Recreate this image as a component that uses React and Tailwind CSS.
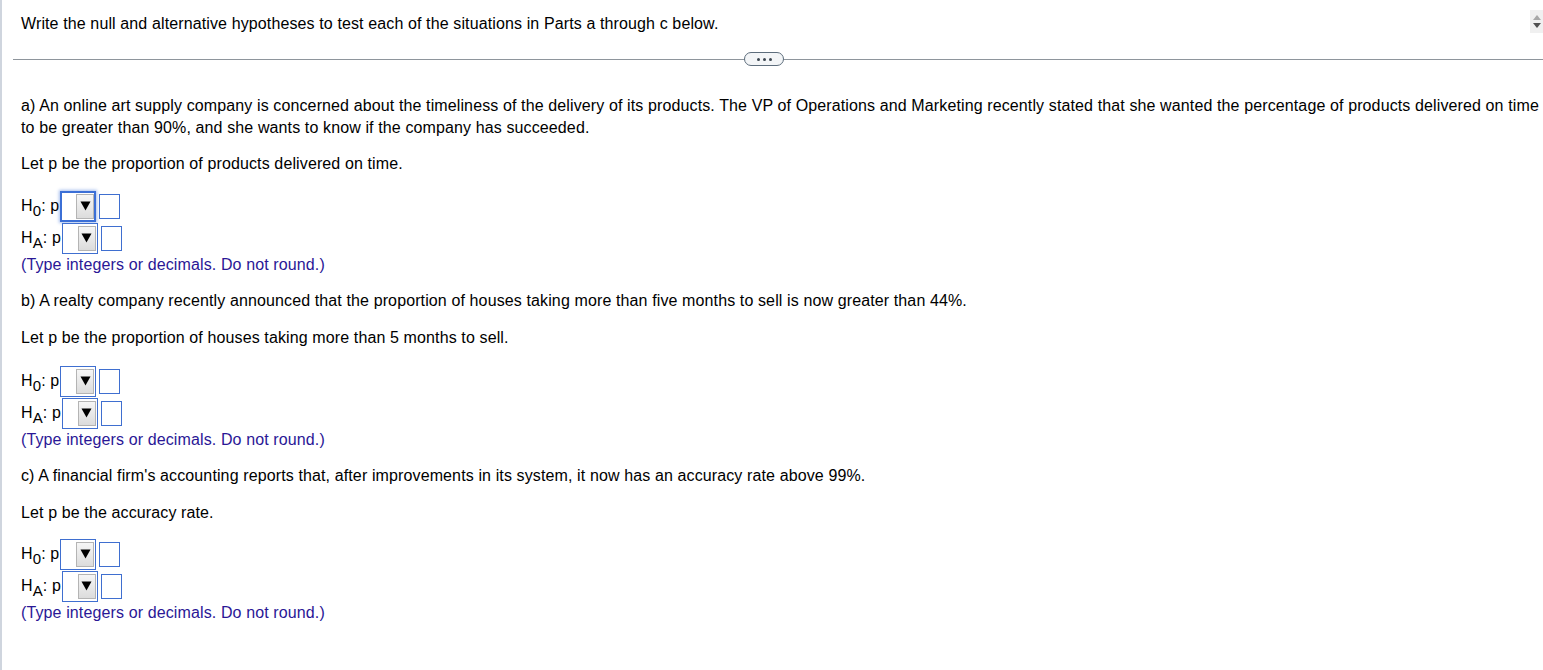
import React from "react";

function Dropdown({ focused }) {
  return (
    <div
      className={
        "box-border flex h-[31px] w-[36px] items-center justify-end bg-white " +
        (focused
          ? "border-2 border-[#3b6fd6] pr-[0px] shadow-[0_0_3px_1px_rgba(59,111,214,0.45)]"
          : "border border-[#3f6fd0] pr-[1px]")
      }
    >
      <div className="flex h-[25px] w-[18px] items-center justify-center border border-[#b4b4b4] bg-gradient-to-b from-[#f6f6f6] to-[#dcdcdc]">
        <svg width="11" height="10" viewBox="0 0 11 10">
          <path d="M0.5 0.5 L10.5 0.5 L5.5 9.5 Z" fill="#000" />
        </svg>
      </div>
    </div>
  );
}

function HypRow({ sub, focused }) {
  return (
    <div className="flex h-[32px] items-center">
      <span className="text-black">
        H<sub className="relative top-[5px] align-baseline text-[15px]">{sub}</sub>: p
      </span>
      <div className="ml-[1px]">
        <Dropdown focused={focused} />
      </div>
      <div className="ml-[3px] h-[25px] w-[21px] border border-[#3f6fd0] bg-white" />
    </div>
  );
}

function Hyps({ focused }) {
  return (
    <div>
      <HypRow sub="0" focused={focused} />
      <HypRow sub="A" />
      <div className="mt-[0px] leading-[22px] text-[#2a1796]">
        (Type integers or decimals. Do not round.)
      </div>
    </div>
  );
}

export default function App() {
  return (
    <div
      className="relative min-h-[670px] w-[1543px] overflow-hidden border-l-2 border-[#cfd5de] bg-white text-[16px] tracking-[0.12px] text-black"
      style={{ fontFamily: '"Liberation Sans", Arial, sans-serif' }}
    >
      {/* scroll arrows */}
      <div className="absolute right-0 top-[10px] flex h-[23px] w-[13px] flex-col items-center justify-center gap-[3px] bg-[#f0f0f0]">
        <svg width="8" height="5" viewBox="0 0 8 5">
          <path d="M0 5 L4 0 L8 5 Z" fill="#a8a8a8" />
        </svg>
        <svg width="8" height="5" viewBox="0 0 8 5">
          <path d="M0 0 L8 0 L4 5 Z" fill="#505050" />
        </svg>
      </div>

      <div className="pl-[19px] pt-[13px] leading-[22px]">
        Write the null and alternative hypotheses to test each of the situations in Parts a through c below.
      </div>

      {/* divider */}
      <div className="relative ml-[11px] mt-[24px] h-[1px] bg-[#8e959c]">
        <div className="absolute left-[731px] top-[-7px] flex h-[14px] w-[40px] items-center justify-center gap-[3px] rounded-full border border-[#5d6d7c] bg-[#f3f5f7]">
          <span className="h-[3px] w-[3px] rounded-full bg-[#3c4650]" />
          <span className="h-[3px] w-[3px] rounded-full bg-[#3c4650]" />
          <span className="h-[3px] w-[3px] rounded-full bg-[#3c4650]" />
        </div>
      </div>

      <div className="pl-[19px] pr-[4px] pt-[35px] leading-[22px]">
        <p>
          a) An online art supply company is concerned about the timeliness of the delivery of its products. The VP of Operations and Marketing recently stated that she wanted the percentage of products delivered on time to be greater than 90%, and she wants to know if the company has succeeded.
        </p>
        <p className="mt-[14px]">Let p be the proportion of products delivered on time.</p>
        <div className="mt-[15px]">
          <Hyps focused />
        </div>

        <p className="mt-[14px]">
          b) A realty company recently announced that the proportion of houses taking more than five months to sell is now greater than 44%.
        </p>
        <p className="mt-[15px]">Let p be the proportion of houses taking more than 5 months to sell.</p>
        <div className="mt-[16px]">
          <Hyps />
        </div>

        <p className="mt-[14px]">
          c) A financial firm's accounting reports that, after improvements in its system, it now has an accuracy rate above 99%.
        </p>
        <p className="mt-[15px]">Let p be the accuracy rate.</p>
        <div className="mt-[14px]">
          <Hyps />
        </div>
      </div>
    </div>
  );
}
